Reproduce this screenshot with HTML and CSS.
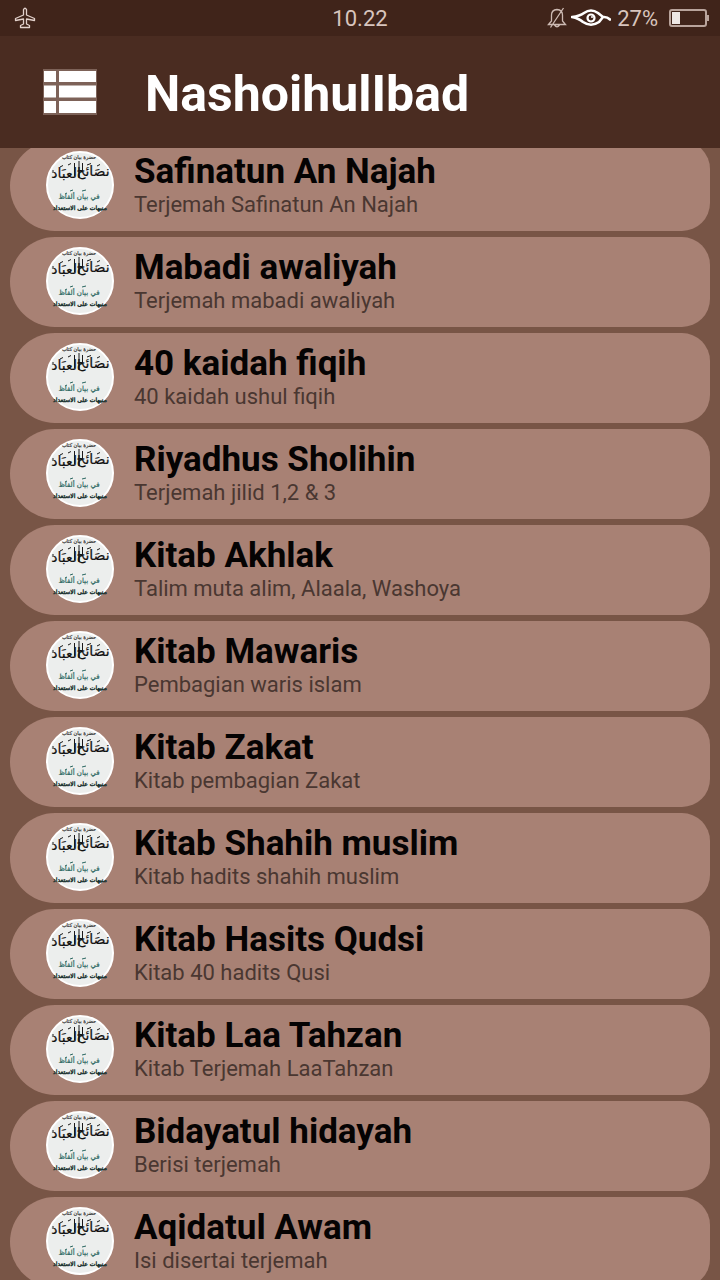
FILE: index.html
```html
<!DOCTYPE html>
<html lang="id">
<head>
<meta charset="utf-8">
<meta name="viewport" content="width=device-width, initial-scale=1">
<title>NashoihulIbad</title>
<link rel="stylesheet" href="styles.css">
</head>
<body>
<svg class="defs" viewBox="0 0 68 68" aria-hidden="true">
  <defs>
  <symbol id="cover" viewBox="0 0 68 68">
    <circle cx="34" cy="34" r="33" fill="#eceeed" stroke="#fff" stroke-width="2"/>
    <g text-anchor="middle" direction="rtl" class="script">
      <text x="33" y="8" font-size="5" fill="#333" stroke="#333" stroke-width=".2">حضرة بيان كتاب</text>
      <text x="47" y="25" font-size="14" fill="#111" stroke="#111" stroke-width=".2">نصَائح</text>
      <text x="20" y="27" font-size="14" fill="#111" stroke="#111" stroke-width=".2">العبَاد</text>
      <text x="33" y="48" font-size="7" fill="#2a6660" stroke="#2a6660" stroke-width=".2">في بيان ألفاظ</text>
      <text x="34" y="59" font-size="6" fill="#18302e" stroke="#18302e" stroke-width=".4">منبهات على الاستعداد</text>
    </g>
    <path d="M33 10V26M28.500 12V25M36.500 12V21M22 14L25 12.500M41 14L45 12.500M14 16L17 14.500M51 15L54 13.500M7 19V22" fill="none" stroke="#1a1a1a" stroke-width="1"/>
    <path d="M24 40L27 39M36 40L40 39M19 43L21 42" fill="none" stroke="#2a6660" stroke-width="1"/>
  </symbol>
  </defs>
</svg>
<div class="screen">
  <div class="status">
    <svg class="plane" viewBox="0 0 22 22" fill="none" stroke="#e3d2cc" stroke-width="1.3" stroke-linejoin="round"><path d="M9.5 2.5Q11 0 12.5 2.5V8L20.5 11.5V13.5L12.5 12V17L15.500 18.500V20.500H6.500V18.500L9.500 17V12L1.500 13.500V11.500L9.500 8Z"/></svg>
    <span class="time">10.22</span>
    <div class="indicators">
      <svg class="bell" viewBox="0 0 20 22" fill="none" stroke="#cdbab3" stroke-width="1.3"><path d="M1.500 17.500L4.500 14V8Q4.500 3 10 2.500Q15.500 3 15.500 8V14L18.500 17.500ZM7.500 18Q10 21.500 12.500 18M16.500 1L3.500 20.500"/></svg>
      <svg class="eye" viewBox="0 0 40 20" fill="none" stroke="#fff" stroke-linecap="round"><path d="M1 9Q9 8 13 5Q20 0 27 5L32 9Q36 8.500 39 11.500M1 9Q8 10.500 12 14Q20 19.500 28 14L32 9" stroke-width="2.600"/><circle cx="20" cy="10" r="3.500" stroke-width="2.200"/><circle cx="21" cy="9" r="1" fill="#fff" stroke="none"/></svg>
      <span>27%</span>
      <svg class="battery" viewBox="0 0 42 20"><rect x="2" y="2" width="36" height="16" rx="2" fill="none" stroke="#b9a49c" stroke-width="2"/><path d="M39 7h2v6h-2z" fill="#b9a49c"/><path d="M4 4h8v12H4z" fill="#eee8e5"/></svg>
    </div>
  </div>
  <header class="bar">
    <button class="menu" aria-label="Menu"><svg viewBox="0 0 54 46"><path fill="#bda49c" d="M0 0h54v46H0z" opacity=".45"/><path fill="#fff" d="M1 2h12v11H1zM16 2h37v11H16zM1 16.500h12v12H1zM16 16.500h37v12H16zM1 32h12v12H1zM16 32h37v12H16z"/></svg></button>
    <h1>NashoihulIbad</h1>
  </header>
  <main class="scroller">
    <ul class="list">
      <li class="card"><svg class="cover"><use href="#cover"/></svg><div><h2>Safinatun An Najah</h2><p>Terjemah Safinatun An Najah</p></div></li>
      <li class="card"><svg class="cover"><use href="#cover"/></svg><div><h2>Mabadi awaliyah</h2><p>Terjemah mabadi awaliyah</p></div></li>
      <li class="card"><svg class="cover"><use href="#cover"/></svg><div><h2>40 kaidah fiqih</h2><p>40 kaidah ushul fiqih</p></div></li>
      <li class="card"><svg class="cover"><use href="#cover"/></svg><div><h2>Riyadhus Sholihin</h2><p>Terjemah jilid 1,2 &amp; 3</p></div></li>
      <li class="card"><svg class="cover"><use href="#cover"/></svg><div><h2>Kitab Akhlak</h2><p>Talim muta alim, Alaala, Washoya</p></div></li>
      <li class="card"><svg class="cover"><use href="#cover"/></svg><div><h2>Kitab Mawaris</h2><p>Pembagian waris islam</p></div></li>
      <li class="card"><svg class="cover"><use href="#cover"/></svg><div><h2>Kitab Zakat</h2><p>Kitab pembagian Zakat</p></div></li>
      <li class="card"><svg class="cover"><use href="#cover"/></svg><div><h2>Kitab Shahih muslim</h2><p>Kitab hadits shahih muslim</p></div></li>
      <li class="card"><svg class="cover"><use href="#cover"/></svg><div><h2>Kitab Hasits Qudsi</h2><p>Kitab 40 hadits Qusi</p></div></li>
      <li class="card"><svg class="cover"><use href="#cover"/></svg><div><h2>Kitab Laa Tahzan</h2><p>Kitab Terjemah LaaTahzan</p></div></li>
      <li class="card"><svg class="cover"><use href="#cover"/></svg><div><h2>Bidayatul hidayah</h2><p>Berisi terjemah</p></div></li>
      <li class="card"><svg class="cover"><use href="#cover"/></svg><div><h2>Aqidatul Awam</h2><p>Isi disertai terjemah</p></div></li>
    </ul>
  </main>
</div>
</body>
</html>
```
FILE: styles.css
```css
* { box-sizing: border-box; }
body, h1, h2, p, ul { margin: 0; padding: 0; }
body { font-family: Roboto, "Liberation Sans", sans-serif; background: #785546; }
.defs { position: absolute; width: 0; height: 0; }
.script { font-family: "DejaVu Sans", sans-serif; }
.screen { display: flex; flex-direction: column; height: 100vh; overflow: hidden; }
.status {
  display: grid;
  grid-template-columns: 1fr auto 1fr;
  align-items: center;
  flex: none;
  height: 36px;
  padding: 0 10px;
  background: #40241a;
  color: #d8c5be;
  font-size: 22px;
}
.plane { width: 22px; height: 22px; margin-left: 4px; }
.indicators { display: flex; align-items: center; justify-content: flex-end; }
.indicators span { margin: 0 10px 0 6px; }
.bell { width: 20px; height: 22px; margin-right: 4px; }
.eye { width: 40px; height: 20px; }
.battery { width: 42px; height: 20px; }
.bar {
  display: flex;
  align-items: center;
  flex: none;
  gap: 48px;
  height: 112px;
  padding: 0 43px;
  background: #4a2c21;
  color: #fff;
}
.menu { width: 54px; height: 46px; padding: 0; border: 0; background: none; }
.menu svg { display: block; }
h1 { padding-top: 4px; font-size: 50px; font-weight: 700; line-height: 60px; }
.scroller { flex: 1; min-height: 0; overflow-y: auto; scrollbar-width: none; }
.list { display: grid; gap: 6px; margin: -7px 10px 0; list-style: none; }
.card {
  display: flex;
  align-items: center;
  gap: 20px;
  height: 90px;
  padding: 0 36px;
  border-radius: 45px 28px 28px 45px;
  background: #a88174;
}
.cover { flex: none; width: 68px; height: 68px; margin-bottom: 2px; }
h2 { color: #050303; font-size: 35px; font-weight: 700; line-height: 38px; }
p { color: #4a3731; font-size: 22px; line-height: 28px; }
```
